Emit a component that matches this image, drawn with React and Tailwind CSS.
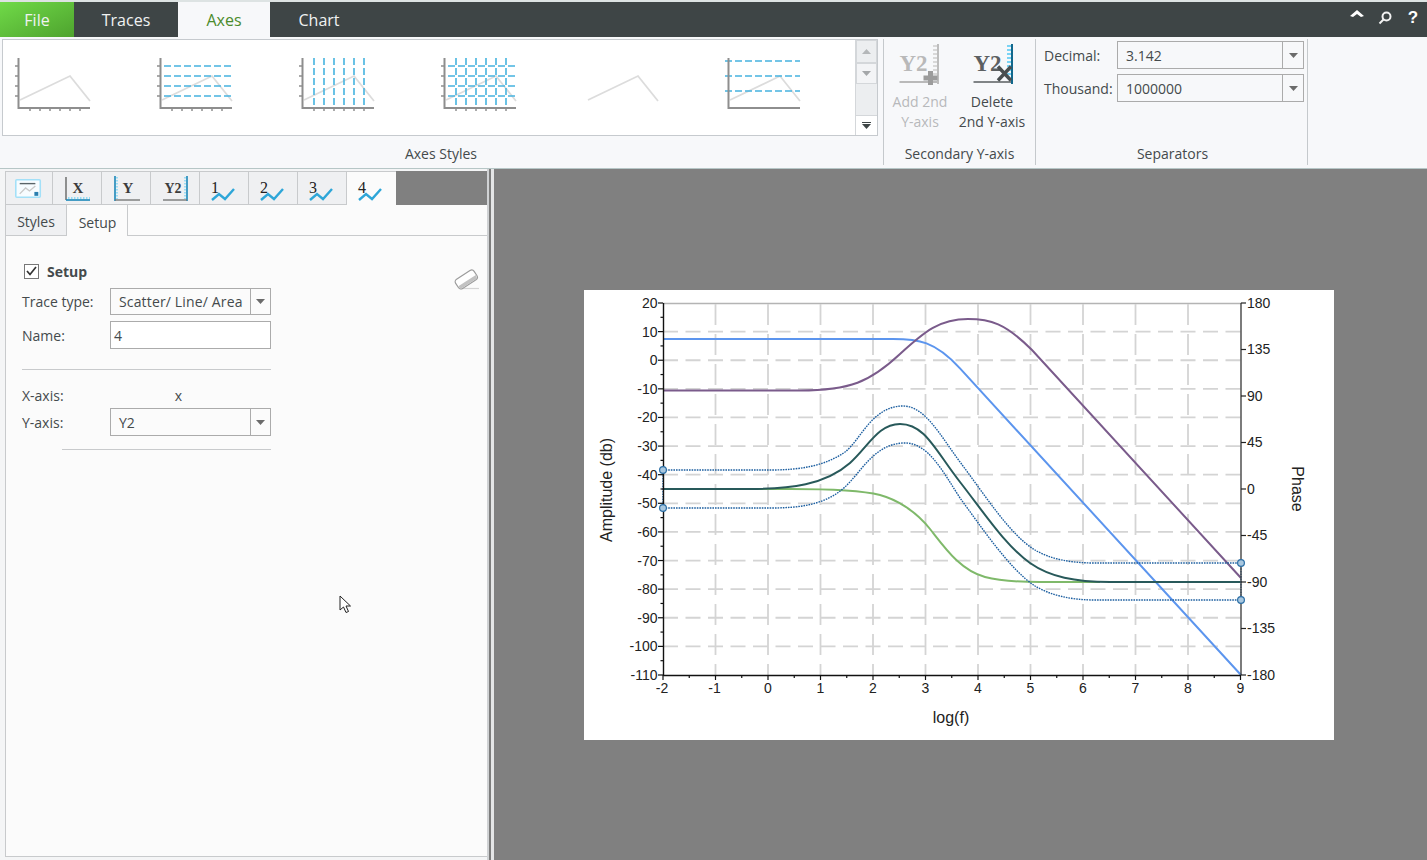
import React from 'react';

const TEXT = "text-[#444a4c]";

const curves = {
  blue: "M663 339 L893 339 C918 339 935 341 960 368.4 L1241 675",
  purple: "M663 390.5 L800 390.5 C850 390.5 870 382 900 354 C925 331 940 319 968 319 C990 319 1005 323 1032 350 L1241 578",
  dark: "M663 489 L750 489 C790 489 825 485 850 463 C868 447 878 424 900 424 C925 424 935 450 960 482 C985 514 1005 545 1030 563 C1050 577 1075 582 1110 582 L1241 582",
  green: "M663 489 L790 489 C830 489 860 490 880 495 C895 499 915 510 930 529 C945 548 960 570 985 577 C1000 581 1015 582 1040 582 L1100 582",
  upper: "M663 470 L770 470 C800 470 825 466 845 452 C860 441 872 406 903 406 C925 406 940 435 960 462 C985 495 1010 535 1035 550 C1050 559 1070 563 1095 563 L1241 563",
  lower: "M663 508 L770 508 C800 508 825 505 845 487 C862 471 875 443 905 443 C928 443 942 470 960 498 C980 525 1010 570 1035 586 C1050 595 1070 600 1095 600 L1241 600",
};

const yLabels = [20,10,0,-10,-20,-30,-40,-50,-60,-70,-80,-90,-100,-110];
const xLabels = [-2,-1,0,1,2,3,4,5,6,7,8,9];
const phase = [180,135,90,45,0,-45,-90,-135,-180];
const yAt = (i) => 303 + i * 28.615;
const xAt = (i) => 663 + i * 52.5;

function Plot() {
  return (
    <svg width="750" height="450" viewBox="584 290 750 450" className="block font-['Liberation_Sans',sans-serif]">
      <line x1="663" y1="303.5" x2="1241" y2="303.5" stroke="#b4b4b4" strokeWidth="1.5" />
      {yLabels.slice(1, 13).map((v, i) => (
        <line key={v} x1="663" y1={yAt(i + 1)} x2="1241" y2={yAt(i + 1)} stroke="#d4d4d4" strokeWidth="1.8" strokeDasharray="15 7.5" />
      ))}
      {xLabels.slice(1, 11).map((v, i) => (
        <line key={v} x1={xAt(i + 1)} y1="304" x2={xAt(i + 1)} y2="675" stroke="#d4d4d4" strokeWidth="1.8" strokeDasharray="21 9" />
      ))}

      <path d={curves.green} fill="none" stroke="#7fb96a" strokeWidth="2" />
      <path d={curves.blue} fill="none" stroke="#5c95ee" strokeWidth="2" />
      <path d={curves.purple} fill="none" stroke="#7a5b8b" strokeWidth="2" />
      <path d={curves.dark} fill="none" stroke="#28595a" strokeWidth="2" />
      <path d={curves.upper} fill="none" stroke="#1d5fa0" strokeWidth="1.4" strokeDasharray="1.6 1" />
      <path d={curves.lower} fill="none" stroke="#1d5fa0" strokeWidth="1.4" strokeDasharray="1.6 1" />
      <line x1="663" y1="470" x2="663" y2="508" stroke="#1d5fa0" strokeWidth="1.4" strokeDasharray="1.6 1" />
      <line x1="1241" y1="563" x2="1241" y2="600" stroke="#1d5fa0" strokeWidth="1.4" strokeDasharray="1.6 1" />

      {/* axes */}
      <line x1="663.5" y1="303" x2="663.5" y2="675" stroke="#111" strokeWidth="1.4" />
      <line x1="663" y1="675.5" x2="1241" y2="675.5" stroke="#111" strokeWidth="1.4" />
      <line x1="1241" y1="303" x2="1241" y2="675" stroke="#444" strokeWidth="1.4" />

      {yLabels.map((v, i) => (
        <g key={v}>
          <line x1="658" y1={yAt(i)} x2="663" y2={yAt(i)} stroke="#111" strokeWidth="1.2" />
          {i < 13 && <line x1="660.5" y1={yAt(i + 0.5)} x2="663" y2={yAt(i + 0.5)} stroke="#111" strokeWidth="1.2" />}
          <text x="657.5" y={yAt(i) + 5} textAnchor="end" fontSize="14" fill="#222">{v}</text>
        </g>
      ))}
      {xLabels.map((v, i) => (
        <g key={v}>
          <line x1={xAt(i)} y1="675" x2={xAt(i)} y2="680" stroke="#111" strokeWidth="1.2" />
          {i < 11 && <line x1={xAt(i + 0.5)} y1="675" x2={xAt(i + 0.5)} y2="678" stroke="#111" strokeWidth="1.2" />}
          <text x={xAt(i) - (v < 0 ? 1 : 0)} y="693" textAnchor="middle" fontSize="14" fill="#222">{v}</text>
        </g>
      ))}
      {phase.map((v, i) => (
        <g key={v}>
          <line x1="1241" y1={303 + i * 46.5} x2="1246" y2={303 + i * 46.5} stroke="#222" strokeWidth="1.2" />
          <text x="1247" y={303 + i * 46.5 + 4.5} fontSize="14" fill="#222">{v}</text>
        </g>
      ))}

      <text x="951" y="723" textAnchor="middle" fontSize="16" fill="#222">log(f)</text>
      <text transform="translate(612 490) rotate(-90)" textAnchor="middle" fontSize="16" fill="#222">Amplitude (db)</text>
      <text transform="translate(1292 489) rotate(90)" textAnchor="middle" fontSize="16" fill="#222">Phase</text>

      {[[663,470],[663,508],[1241,563],[1241,600]].map(([cx, cy]) => (
        <circle key={`${cx}-${cy}`} cx={cx} cy={cy} r="3.4" fill="#a9c7df" stroke="#2c6fa6" strokeWidth="1.2" />
      ))}
    </svg>
  );
}

// small previews in the axes styles gallery
function StylePreview({ h = [], v = [], hStart = 9, axes = true, ticks = true }) {
  return (
    <svg width="80" height="58" viewBox="0 0 80 58" className="block">
      {axes && ticks && [8, 18, 28, 38].map((y) => (
        <line key={y} x1="2" y1={y} x2="5" y2={y} stroke="#8e8e8e" strokeWidth="1.5" />
      ))}
      {axes && ticks && [17, 27, 37, 47, 57, 67].map((x) => (
        <line key={x} x1={x} y1="50" x2={x} y2="53" stroke="#8e8e8e" strokeWidth="1.5" />
      ))}
      <polyline points="7,42 57,18 77,43" fill="none" stroke="#dcdcdc" strokeWidth="1.8" />
      {h.map((y) => (
        <line key={y} x1={hStart} y1={y} x2="77" y2={y} stroke="#45b3df" strokeWidth="1.6" strokeDasharray="7 3" />
      ))}
      {v.map((x) => (
        <line key={x} x1={x} y1="0" x2={x} y2="48" stroke="#45b3df" strokeWidth="1.6" strokeDasharray="7 3" />
      ))}
      {axes && <polyline points="5.5,0 5.5,50 77,50" fill="none" stroke="#8e8e8e" strokeWidth="2" />}
    </svg>
  );
}

const grid = [8, 18, 28, 38];
const cols = [17, 27, 37, 47, 57, 67];

function Arrow({ color = "#6b6b6b", flip = false }) {
  return (
    <svg width="9" height="5" viewBox="0 0 9 5" className={flip ? "rotate-180" : ""}>
      <polygon points="0,0 9,0 4.5,5" fill={color} />
    </svg>
  );
}

function Combo({ value, width, height, arrow = "w-[21px]", textClass = "pl-[8px]" }) {
  return (
    <div className={`flex border border-[#ababab] ${width} ${height}`}>
      <div className={`flex-1 flex items-center ${textClass}`}>{value}</div>
      <div className={`${arrow} border-l border-[#ababab] flex items-center justify-center`}>
        <Arrow />
      </div>
    </div>
  );
}

function Y2Icon({ disabled }) {
  const c = disabled ? "#b9b9b9" : "#5c6062";
  return (
    <svg width="52" height="44" viewBox="0 0 52 44" className="block">
      <g transform={disabled ? undefined : "translate(2 0)"}>
        <text x="5.5" y="28" fontSize="23" fontWeight="700" fill={c} className="font-['Liberation_Serif',serif]">Y2</text>
        <line x1="5.5" y1="39" x2="44" y2="39" stroke={disabled ? "#b9b9b9" : "#808486"} strokeWidth="2" />
        {[3, 7, 11, 15, 19, 23, 27, 31].map((y) => (
          <line key={y} x1="39" y1={y} x2="43" y2={y} stroke={disabled ? "#d8d8d8" : "#7ad4f5"} strokeWidth="2" />
        ))}
        <line x1="44" y1="1" x2="44" y2="41" stroke={disabled ? "#bdbdbd" : "#12688c"} strokeWidth="2" />
        {disabled ? (
          <path d="M36.5 28v14M29.5 35h14" stroke="#9c9c9c" strokeWidth="5" fill="none" />
        ) : (
          <path d="M30 23.5l13 14M43 23.5L30 37.5" stroke="#4a4f50" strokeWidth="3.4" fill="none" />
        )}
      </g>
    </svg>
  );
}

function DigitTab({ n }) {
  return (
    <svg width="48" height="33" viewBox="0 0 48 33">
      <text x="15" y="21" textAnchor="middle" fontSize="16" fill="#222" className="font-['Liberation_Serif',serif]">{n}</text>
      <polyline points="12,28 19,22 25,27 34,17" fill="none" stroke="#2ea6d8" strokeWidth="2.4" />
    </svg>
  );
}

function AxisTab({ kind }) {
  return (
    <svg width="48" height="33" viewBox="0 0 48 33" className="font-['Liberation_Serif',serif]">
      {kind === "X" && (
        <>
          <text x="25" y="21" textAnchor="middle" fontSize="15" fontWeight="700" fill="#3c3c3c">X</text>
          <line x1="13" y1="5" x2="13" y2="28" stroke="#666" strokeWidth="1.4" />
          <line x1="15" y1="26" x2="37" y2="26" stroke="#7ad4f5" strokeWidth="1.4" strokeDasharray="1.5 1.5" />
          <line x1="13" y1="28" x2="37" y2="28" stroke="#1b87b8" strokeWidth="1.6" />
        </>
      )}
      {kind === "Y" && (
        <>
          <text x="26" y="21" textAnchor="middle" fontSize="15" fontWeight="700" fill="#3c3c3c">Y</text>
          <line x1="15" y1="5" x2="15" y2="27" stroke="#7ad4f5" strokeWidth="1.4" strokeDasharray="1.5 1.5" />
          <line x1="13" y1="4" x2="13" y2="29" stroke="#1b87b8" strokeWidth="1.6" />
          <line x1="13" y1="28" x2="38" y2="28" stroke="#777" strokeWidth="1.4" />
        </>
      )}
      {kind === "Y2" && (
        <>
          <text x="22" y="21" textAnchor="middle" fontSize="14" fontWeight="700" fill="#3c3c3c">Y2</text>
          <line x1="34" y1="5" x2="34" y2="27" stroke="#7ad4f5" strokeWidth="1.4" strokeDasharray="1.5 1.5" />
          <line x1="36" y1="4" x2="36" y2="29" stroke="#1b87b8" strokeWidth="1.6" />
          <line x1="12" y1="28" x2="36" y2="28" stroke="#777" strokeWidth="1.4" />
        </>
      )}
    </svg>
  );
}

function ChartTab() {
  return (
    <svg width="47" height="33" viewBox="0 0 47 33">
      <rect x="10" y="7.5" width="25" height="18" fill="#f7fcff" stroke="#a3e0f8" strokeWidth="1.6" rx="1" />
      <line x1="14" y1="11.5" x2="30" y2="11.5" stroke="#5a6468" strokeWidth="1.4" />
      <polyline points="14,22 20,16 24,19 30,14" fill="none" stroke="#c9c9c9" strokeWidth="1.4" />
      <rect x="29" y="20" width="4" height="4" fill="#2a7fb0" />
    </svg>
  );
}

export default function App() {
  return (
    <div className={`relative h-screen flex flex-col overflow-hidden bg-[#808080] text-[14px] ${TEXT} font-['Open_Sans',sans-serif]`}>
      <div className="h-[2px] bg-[#dde3e3]" />

      {/* ribbon tabs */}
      <div className="h-[35px] flex bg-[#3e4546] text-[16px] text-[#f0f2f2]">
        <div className="w-[74px] flex items-center justify-center bg-gradient-to-br from-[#70da48] to-[#4ea32e]">File</div>
        <div className="w-[104px] flex items-center justify-center">Traces</div>
        <div className="w-[92px] flex items-center justify-center bg-[#f7f8fa] text-[#4b8b2c]">Axes</div>
        <div className="w-[98px] flex items-center justify-center">Chart</div>
        <div className="ml-auto flex items-center pr-[7px] gap-[14px]">
          <svg width="14" height="7" viewBox="0 0 14 7" className="mb-[12px]"><polygon points="7,0 14,6 11,7 7,4 3,7 0,6" fill="#fff" /></svg>
          <svg width="14" height="14" viewBox="0 0 14 14" className="mb-[3px]">
            <circle cx="8.5" cy="5.5" r="4" fill="none" stroke="#f2f2f2" strokeWidth="2" />
            <line x1="5.5" y1="8.5" x2="1.5" y2="12.5" stroke="#f2f2f2" strokeWidth="2" />
          </svg>
          <span className="w-[14px] text-center text-[17px] font-bold text-white mb-[3px] font-['Liberation_Sans',sans-serif]">?</span>
        </div>
      </div>

      {/* ribbon */}
      <div className="h-[132px] flex pt-[2px] bg-[#f7f8fa] border-b border-[#b6c6c6]">
        <div className="w-[884px] h-[126px] flex flex-col pl-[2px] border-r border-[#c5c9cc]">
          <div className="w-[876px] h-[97px] flex bg-white border border-[#c6cace]">
            <div className="flex-1 flex pl-[10px] pt-[18px]">
              <div className="w-[142px]"><StylePreview /></div>
              <div className="w-[142px]"><StylePreview h={grid} /></div>
              <div className="w-[142px]"><StylePreview v={cols} /></div>
              <div className="w-[142px]"><StylePreview h={grid} v={cols} /></div>
              <div className="w-[142px]"><StylePreview axes={false} /></div>
              <div className="w-[80px]"><StylePreview h={[3, 18, 33]} hStart={2} ticks={false} /></div>
            </div>
            <div className="w-[22px] flex flex-col border-l border-[#d4d7da]">
              <div className="h-[23px] flex items-center justify-center bg-[#eceef0] border border-[#d4d7da]"><Arrow color="#b4b7b9" flip /></div>
              <div className="h-[21px] flex items-center justify-center bg-[#f3f4f6] border border-[#d4d7da]"><Arrow color="#a4a7a9" /></div>
              <div className="flex-1 bg-[#eceef0]" />
              <div className="h-[20px] flex flex-col items-center justify-center gap-[1px] bg-white border-t border-[#d4d7da]">
                <div className="w-[9px] h-[1px] bg-[#3e4546]" />
                <Arrow color="#3e4546" />
              </div>
            </div>
          </div>
          <div className="mt-auto h-[24px] flex items-center justify-center pr-[3px]">Axes Styles</div>
        </div>

        <div className="w-[152px] h-[126px] flex flex-col border-r border-[#c5c9cc]">
          <div className="flex pt-[4px]">
            <div className="w-[72px] flex flex-col items-center text-[#b7b9bb]">
              <Y2Icon disabled />
              <div className="mt-[5px] leading-[20px] text-center">Add 2nd<br />Y-axis</div>
            </div>
            <div className="w-[72px] flex flex-col items-center">
              <Y2Icon />
              <div className="mt-[5px] leading-[20px] text-center whitespace-nowrap">Delete<br />2nd Y-axis</div>
            </div>
          </div>
          <div className="mt-auto h-[24px] flex items-center justify-center">Secondary Y-axis</div>
        </div>

        <div className="w-[272px] h-[126px] flex flex-col border-r border-[#c5c9cc]">
          <div className="flex flex-col gap-[5px] pt-[2px] pl-[8px]">
            <div className="flex items-center">
              <span className="w-[73px]">Decimal:</span>
              <Combo value="3.142" width="w-[187px]" height="h-[28px]" />
            </div>
            <div className="flex items-center">
              <span className="w-[73px]">Thousand:</span>
              <Combo value="1000000" width="w-[187px]" height="h-[28px]" />
            </div>
          </div>
          <div className="mt-auto h-[24px] flex items-center justify-center pl-[2px]">Separators</div>
        </div>
      </div>

      {/* main */}
      <div className="flex-1 flex min-h-0">
        <div className="w-[487px] flex flex-col pl-[5px] pt-[2px] pb-[3px] bg-[#f4f5f6]">
          <div className="h-[34px] flex bg-[#808080] shrink-0">
            <div className="w-[48px] flex bg-[#eff0f2] border border-[#c8cacc]"><ChartTab /></div>
            {["X", "Y", "Y2"].map((k) => (
              <div key={k} className="w-[49px] flex bg-[#eff0f2] border-y border-r border-[#c8cacc]"><AxisTab kind={k} /></div>
            ))}
            {[1, 2, 3].map((n) => (
              <div key={n} className="w-[49px] flex bg-[#eff0f2] border-y border-r border-[#c8cacc]"><DigitTab n={n} /></div>
            ))}
            <div className="w-[49px] flex bg-[#fbfbfb] border-t border-[#c8cacc]"><DigitTab n={4} /></div>
          </div>

          <div className="flex-1 flex flex-col bg-[#fbfbfb] border-l border-b border-[#c8cacc]">
            <div className="h-[31px] flex border-b border-[#c8cacc] shrink-0">
              <div className="w-[61px] flex items-center justify-center pt-[3px] bg-[#eff0f2] border-r border-[#c8cacc]">Styles</div>
              <div className="w-[61px] h-[31px] flex items-center justify-center pt-[3px] pl-[1px] bg-[#fbfbfb] border-r border-[#c8cacc]">Setup</div>
            </div>

            <div className="flex flex-col pl-[16px]">
              <div className="mt-[25px] h-[20px] flex items-center">
                <div className="ml-[2px] w-[15px] h-[15px] flex items-center justify-center border border-[#777] bg-white">
                  <svg width="11" height="10" viewBox="0 0 11 10"><polyline points="1,5 4,8.5 10,1" fill="none" stroke="#333" strokeWidth="1.7" /></svg>
                </div>
                <span className="ml-[8px] font-bold">Setup</span>
                <svg width="26" height="22" viewBox="0 0 26 22" className="ml-auto mr-[7px] self-start mt-[7px]">
                  <line x1="7" y1="20.5" x2="25" y2="20.5" stroke="#d4d4d4" strokeWidth="1.2" />
                  <g transform="rotate(-33 12 11)">
                    <rect x="1" y="6" width="22" height="11" rx="3" fill="#fff" stroke="#9c9c9c" strokeWidth="1.2" />
                    <path d="M1.6 13 L22.4 13 L22.4 14 Q22.4 16.4 20 16.4 L4 16.4 Q1.6 16.4 1.6 14 Z" fill="#c2c2c2" />
                  </g>
                </svg>
              </div>

              <div className="mt-[7px] flex items-center">
                <span className="w-[88px]">Trace type:</span>
                <Combo value="Scatter/ Line/ Area" width="w-[161px]" height="h-[27px]" arrow="w-[20px]" textClass="pl-[8px] tracking-[0.15px]" />
              </div>
              <div className="mt-[6px] flex items-center">
                <span className="w-[88px]">Name:</span>
                <div className="w-[161px] h-[28px] flex items-center pl-[3px] bg-white border border-[#ababab]">4</div>
              </div>

              <div className="mt-[20px] w-[249px] h-px bg-[#c8cacc]" />

              <div className="mt-[15px] h-[20px] flex items-center">
                <span className="w-[88px]">X-axis:</span>
                <span className="w-[161px] pr-[24px] text-center">x</span>
              </div>
              <div className="mt-[3px] flex items-center">
                <span className="w-[88px]">Y-axis:</span>
                <Combo value="Y2" width="w-[161px]" height="h-[28px]" arrow="w-[20px]" />
              </div>

              <div className="mt-[13px] ml-[40px] w-[209px] h-px bg-[#c8cacc]" />
            </div>
          </div>
        </div>

        {/* splitter */}
        <div className="w-[7px] flex">
          <div className="w-[2px] bg-[#d0d2d4]" />
          <div className="w-[2px] bg-[#7c7c7c]" />
          <div className="w-[3px] bg-[#e4e5e6]" />
        </div>

        <div className="flex-1 flex items-center justify-center pr-[3px] bg-[#808080]">
          <div className="bg-white">
            <Plot />
          </div>
        </div>
      </div>

      {/* mouse pointer */}
      <svg width="14" height="19" viewBox="0 0 14 19" className="absolute left-[339px] top-[595px]">
        <path d="M1 1 L1 15 L4.5 12 L7 17.5 L9.5 16.5 L7 11 L11.5 11 Z" fill="#fff" stroke="#222" strokeWidth="1" />
      </svg>
    </div>
  );
}
